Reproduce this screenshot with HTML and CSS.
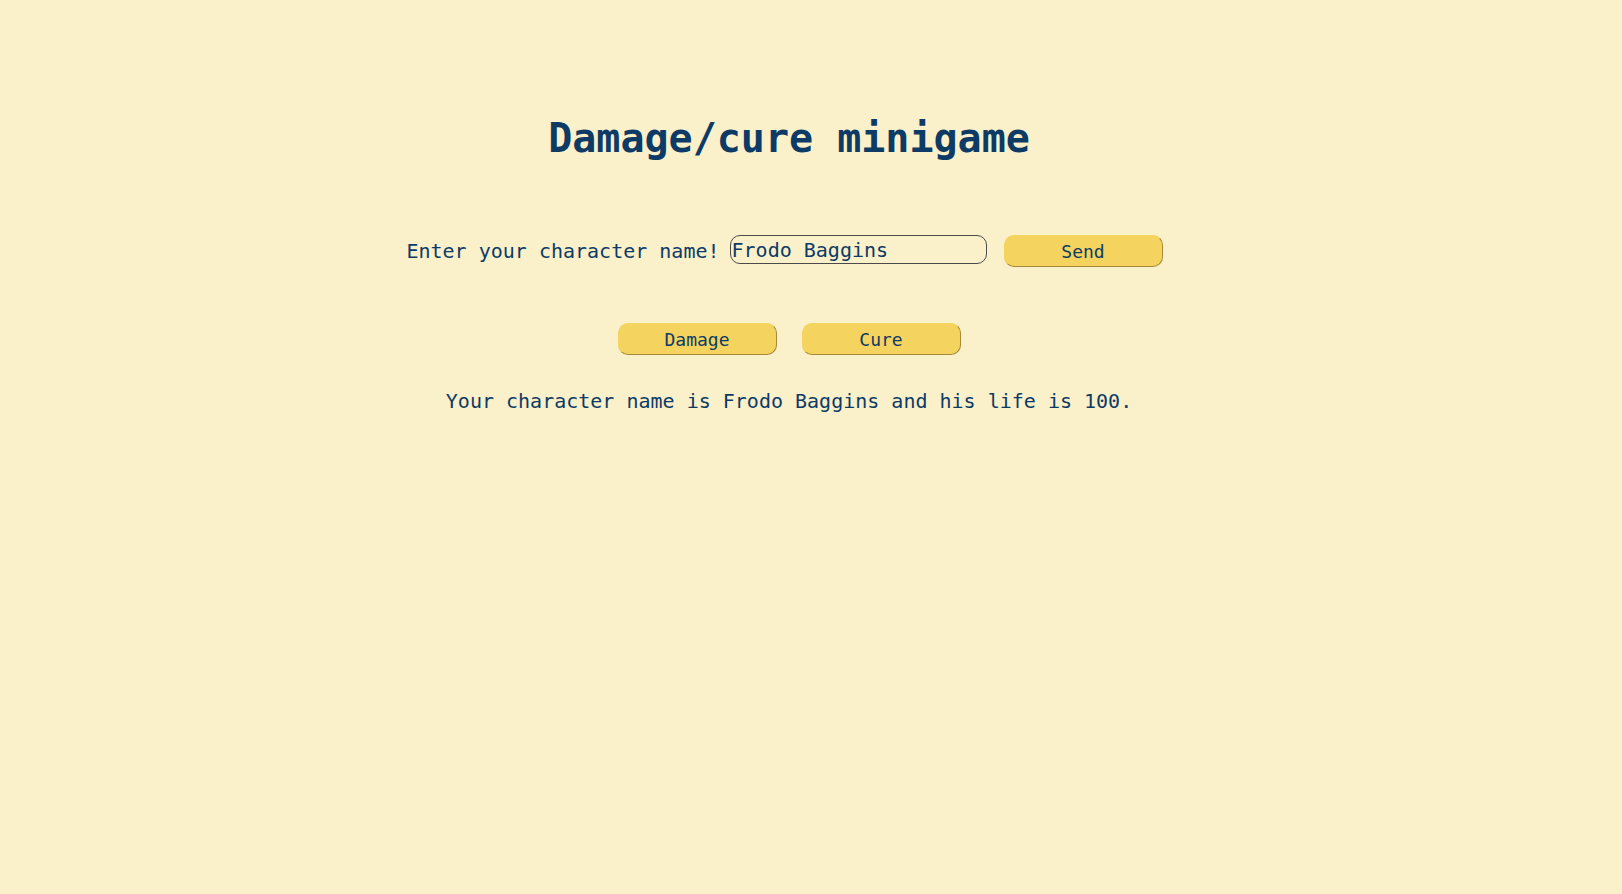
FILE: index.html
```html
<!DOCTYPE html>
<html lang="en">
<head>
<meta charset="utf-8">
<title>Damage/cure minigame</title>
<link rel="stylesheet" href="styles.css">
</head>
<body>
<main class="game">
  <h1 class="title">Damage/cure minigame</h1>
  <form class="name-row" onsubmit="return false">
    <label class="name-label" for="name">Enter your character name!</label>
    <input class="name-input" id="name" type="text" value="Frodo Baggins">
    <button class="btn" type="button">Send</button>
  </form>
  <div class="actions">
    <button class="btn" type="button">Damage</button>
    <button class="btn" type="button">Cure</button>
  </div>
  <p class="status">Your character name is Frodo Baggins and his life is 100.</p>
</main>
</body>
</html>
```
FILE: styles.css
```css
html, body {
  margin: 0;
  padding: 0;
  background: #faf0ca;
}

body {
  font-family: "DejaVu Sans Mono", "Liberation Mono", monospace;
  color: #0d3b66;
  min-height: 100vh;
}

.game {
  display: flex;
  flex-direction: column;
  align-items: center;
  padding: 114px 44px 0 0;
}

.title {
  margin: 0;
  font-size: 40px;
  line-height: 48px;
  font-weight: bold;
  color: #0d3b66;
}

.name-row {
  display: flex;
  align-items: flex-start;
  margin: 73px 9px 0 0;
  height: 32px;
}

.name-label {
  font-size: 20px;
  line-height: 32px;
  margin-right: 10px;
}

.name-input {
  box-sizing: border-box;
  width: 257px;
  height: 29px;
  padding: 0 1px;
  margin: 0 17px 0 0;
  border: 1px solid #4a4a4a;
  border-radius: 10px;
  background: transparent;
  font-family: "DejaVu Sans Mono", "Liberation Mono", monospace;
  font-size: 20px;
  color: #0d3b66;
  outline: none;
}

.btn {
  box-sizing: border-box;
  width: 159px;
  height: 32px;
  padding: 0;
  margin: 0;
  border: 1px solid #f4d35e;
  border-right-color: #a8893a;
  border-bottom-color: #a8893a;
  border-radius: 10px;
  background: #f4d35e;
  font-family: "DejaVu Sans Mono", "Liberation Mono", monospace;
  font-size: 18px;
  color: #0d3b66;
  cursor: pointer;
}

.actions {
  display: flex;
  gap: 25px;
  margin-top: 56px;
}

.status {
  margin: 34px 0 0 0;
  font-size: 20px;
  line-height: 24px;
}
```
